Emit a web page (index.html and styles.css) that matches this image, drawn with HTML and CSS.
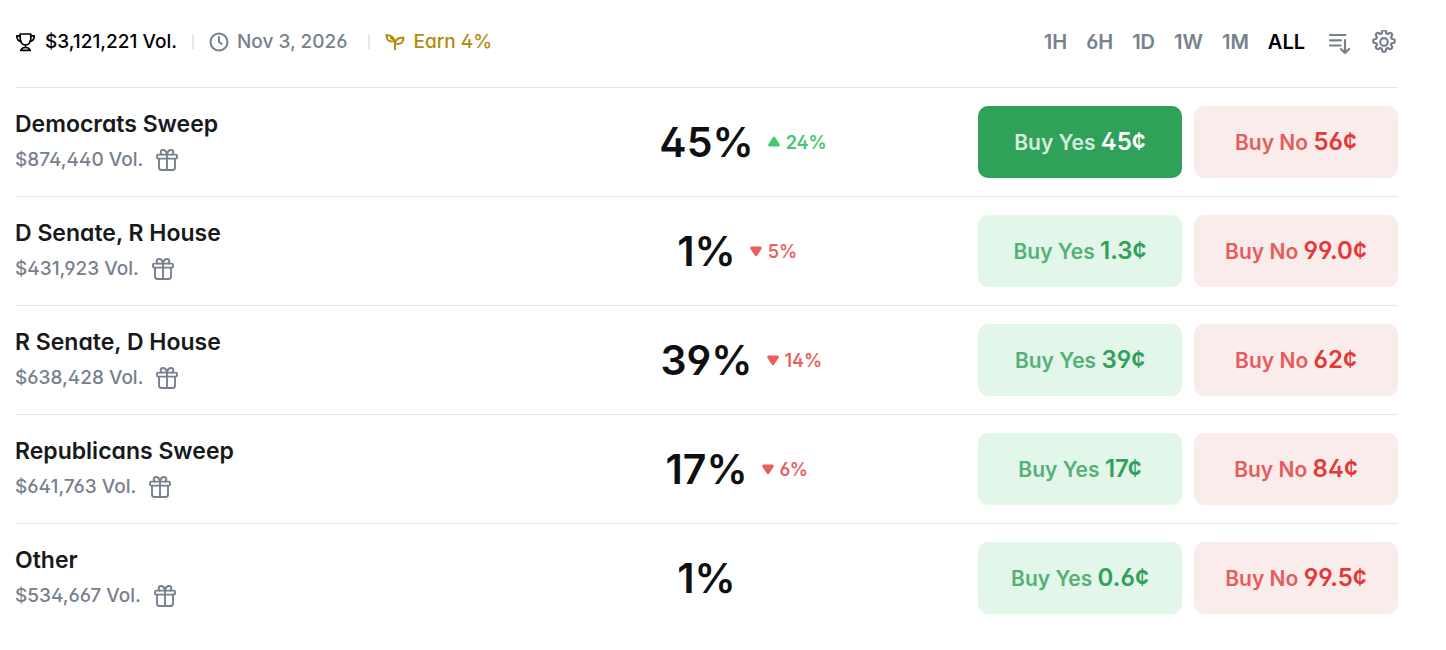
FILE: index.html
```html
<!DOCTYPE html>
<html lang="en">
  <head>
    <meta charset="UTF-8" />
    <meta name="viewport" content="width=device-width, initial-scale=1.0" />
    <title>Balance of Power: 2026 Midterms</title>
    <link rel="stylesheet" href="styles.css">
  </head>
  <body>
    <!-- shared icons -->
    <svg class="sprite" aria-hidden="true">
      <symbol id="gift" viewBox="0 0 22 22">
        <g fill="none" stroke="currentColor" stroke-width="1.9" stroke-linecap="round" stroke-linejoin="round">
          <rect x="1" y="5.6" width="20" height="4" rx="1.2" />
          <path d="M3 9.6v9a2.4 2.4 0 0 0 2.4 2.4h11.2a2.4 2.4 0 0 0 2.4-2.4v-9M11 5.6V21" />
          <path d="M11 5.6C10.5 2.6 9 1 7 1a2.3 2.3 0 0 0-2.3 2.3c0 1 .4 1.7 1 2.3M11 5.6C11.5 2.6 13 1 15 1a2.3 2.3 0 0 1 2.3 2.3c0 1-.4 1.7-1 2.3" />
        </g>
      </symbol>
      <symbol id="up" viewBox="0 0 12 12">
        <path d="M4.8 1.4a1.500 1.500 0 0 1 2.400 0l4.300 6.700c.7 1.100 0 2.400-1.300 2.400H1.800C.5 10.500-.2 9.200.5 8.100z" fill="currentColor" />
      </symbol>
      <symbol id="down" viewBox="0 0 12 12">
        <path d="M4.8 10.600a1.500 1.500 0 0 0 2.400 0l4.300-6.700c.7-1.100 0-2.400-1.300-2.400H1.800C.5 1.500-.2 2.800.5 3.900z" fill="currentColor" />
      </symbol>
    </svg>

    <main class="market">
      <header class="market-header">
        <div class="market-info">
          <span class="info-item volume">
            <svg class="info-icon" viewBox="0 0 20 20" fill="none" stroke="currentColor" stroke-width="1.7" stroke-linecap="round" stroke-linejoin="round">
              <path d="M5.200 2h10.600v4.500c0 3.800-2 6.500-5.300 6.500S5.200 10.300 5.200 6.500z" />
              <path d="M5.200 3.800H1.800c0 3.200 1.400 5.400 4.400 5.600M15.800 3.800h3.400c0 3.200-1.400 5.400-4.400 5.600M10.500 13v2.500M5.800 18.400c.6-1.900 2.200-2.900 4.700-2.900s4.100 1 4.700 2.900z" />
            </svg>
            $3,121,221 Vol.
          </span>
          <span class="divider"></span>
          <span class="info-item date">
            <svg class="info-icon" viewBox="0 0 20 20" fill="none" stroke="currentColor" stroke-width="2" stroke-linecap="round" stroke-linejoin="round">
              <circle cx="10" cy="10" r="8.500" />
              <path d="M10 5v5l2.800 2" />
            </svg>
            Nov 3, 2026
          </span>
          <span class="divider"></span>
          <a href="#" class="info-item earn">
            <svg class="info-icon" viewBox="0 0 20 20" fill="none" stroke="currentColor" stroke-width="2" stroke-linecap="round" stroke-linejoin="round">
              <path d="M10 17.500v-6C10 6.500 7 3 1.500 3c0 4.500 2.300 6.800 5.700 6.500" />
              <path d="M5.800 6C8 6.700 10 8.700 10 11.500" />
              <path d="M10 12.500c0-4.500 3-7 8.500-7 0 4.700-2.500 6.800-6.300 6.500" />
            </svg>
            Earn 4%
          </a>
        </div>

        <div class="chart-controls">
          <button class="range">1H</button>
          <button class="range">6H</button>
          <button class="range">1D</button>
          <button class="range">1W</button>
          <button class="range">1M</button>
          <button class="range active">ALL</button>
          <button class="icon-btn sort" aria-label="Sort">
            <svg viewBox="0 0 24 24" fill="none" stroke="currentColor" stroke-width="2.200" stroke-linecap="round" stroke-linejoin="round">
              <path d="M3 5h15.500M3 10.300h11M3 15.500h10.500M18 10v12.500M14 19l4 4 4-4" />
            </svg>
          </button>
          <button class="icon-btn" aria-label="Settings">
            <svg viewBox="0 0 24 24" fill="none" stroke="currentColor" stroke-width="2.200" stroke-linejoin="round">
              <circle cx="12" cy="12" r="3.800" />
              <path d="M10 2.200a2 2 0 0 1 4 0l.3 1.200 1.500.6 1.100-.7a2 2 0 0 1 2.800 2.800l-.7 1.100.6 1.500 1.200.3a2 2 0 0 1 0 4l-1.200.3-.6 1.500.7 1.100a2 2 0 0 1-2.800 2.800l-1.100-.7-1.500.6-.3 1.200a2 2 0 0 1-4 0l-.3-1.200-1.500-.6-1.100.7a2 2 0 0 1-2.800-2.800l.7-1.100-.6-1.500-1.200-.3a2 2 0 0 1 0-4l1.200-.3.6-1.500-.7-1.100a2 2 0 0 1 2.800-2.800l1.100.7 1.500-.6z" />
            </svg>
          </button>
        </div>
      </header>

      <section class="outcome">
        <div class="outcome-info">
          <h2 class="outcome-name">Democrats Sweep</h2>
          <p class="outcome-volume">$874,440 Vol. <svg class="gift"><use href="#gift" /></svg></p>
        </div>
        <div class="chance">45%</div>
        <div class="outcome-side">
          <span class="change up"><svg><use href="#up" /></svg>24%</span>
          <div class="actions">
            <button class="buy yes selected"><span>Buy Yes</span> <b>45¢</b></button>
            <button class="buy no"><span>Buy No</span> <b>56¢</b></button>
          </div>
        </div>
      </section>

      <section class="outcome">
        <div class="outcome-info">
          <h2 class="outcome-name">D Senate, R House</h2>
          <p class="outcome-volume">$431,923 Vol. <svg class="gift"><use href="#gift" /></svg></p>
        </div>
        <div class="chance">1%</div>
        <div class="outcome-side">
          <span class="change down"><svg><use href="#down" /></svg>5%</span>
          <div class="actions">
            <button class="buy yes"><span>Buy Yes</span> <b>1.3¢</b></button>
            <button class="buy no"><span>Buy No</span> <b>99.0¢</b></button>
          </div>
        </div>
      </section>

      <section class="outcome">
        <div class="outcome-info">
          <h2 class="outcome-name">R Senate, D House</h2>
          <p class="outcome-volume">$638,428 Vol. <svg class="gift"><use href="#gift" /></svg></p>
        </div>
        <div class="chance">39%</div>
        <div class="outcome-side">
          <span class="change down"><svg><use href="#down" /></svg>14%</span>
          <div class="actions">
            <button class="buy yes"><span>Buy Yes</span> <b>39¢</b></button>
            <button class="buy no"><span>Buy No</span> <b>62¢</b></button>
          </div>
        </div>
      </section>

      <section class="outcome">
        <div class="outcome-info">
          <h2 class="outcome-name">Republicans Sweep</h2>
          <p class="outcome-volume">$641,763 Vol. <svg class="gift"><use href="#gift" /></svg></p>
        </div>
        <div class="chance">17%</div>
        <div class="outcome-side">
          <span class="change down"><svg><use href="#down" /></svg>6%</span>
          <div class="actions">
            <button class="buy yes"><span>Buy Yes</span> <b>17¢</b></button>
            <button class="buy no"><span>Buy No</span> <b>84¢</b></button>
          </div>
        </div>
      </section>

      <section class="outcome">
        <div class="outcome-info">
          <h2 class="outcome-name">Other</h2>
          <p class="outcome-volume">$534,667 Vol. <svg class="gift"><use href="#gift" /></svg></p>
        </div>
        <div class="chance">1%</div>
        <div class="outcome-side">
          <div class="actions">
            <button class="buy yes"><span>Buy Yes</span> <b>0.6¢</b></button>
            <button class="buy no"><span>Buy No</span> <b>99.5¢</b></button>
          </div>
        </div>
      </section>
    </main>
  </body>
</html>
```
FILE: styles.css
```css
:root {
  --text-color: #18191b;
  --muted-color: #77808d;
  --line-color: #e6e7e8;
  --green: #30a159;
  --green-light: #e3f6ea;
  --red: #e23939;
  --red-light: #fbecec;
  --gold: #b38b0d;
}

* {
  margin: 0;
  padding: 0;
  box-sizing: border-box;
}

body {
  background: #fff;
  color: var(--text-color);
  font-family: Inter, "Liberation Sans", sans-serif;
  font-size: 19px;
  font-weight: 500;
  font-feature-settings: "cv11", "cv02", "cv03", "cv04";
}

button {
  font: inherit;
  font-feature-settings: inherit;
  color: inherit;
  background: none;
  border: none;
  cursor: pointer;
}

.sprite {
  display: none;
}

.market {
  padding: 0 48px 0 15px;
}

.market-header {
  display: flex;
  justify-content: space-between;
  align-items: center;
  height: 87px;
  padding-bottom: 4px;
}

.market-info,
.info-item,
.chart-controls {
  display: flex;
  align-items: center;
}

.market-info {
  gap: 15px;
}

.info-item {
  gap: 8px;
  line-height: 24px;
  text-decoration: none;
}

.info-icon {
  width: 20px;
  height: 20px;
}

.volume {
  gap: 10px;
  color: #000;
}

.date {
  color: var(--muted-color);
  margin-right: 6px;
}

.earn {
  color: var(--gold);
}

.divider {
  width: 2px;
  height: 14px;
  background: var(--line-color);
}

.chart-controls {
  gap: 19px;
  padding-right: 2px;
  color: var(--muted-color);
}

.range {
  font-size: 20px;
  font-weight: 600;
  line-height: 24px;
}

.range.active {
  color: #000;
}

.icon-btn {
  height: 24px;
}

.icon-btn svg {
  display: block;
  width: 24px;
  height: 24px;
}

.sort {
  margin: 0 2px 0 3px;
}

.outcome {
  display: grid;
  grid-template-columns: 1fr auto 1fr;
  align-items: center;
  padding: 18px 0;
  border-top: 1px solid var(--line-color);
}

.outcome-name {
  font-size: 23px;
  font-weight: 600;
  line-height: 36px;
}

.outcome-volume {
  display: flex;
  align-items: center;
  gap: 13px;
  line-height: 36px;
  color: var(--muted-color);
}

.gift {
  width: 22px;
  height: 22px;
}

.chance {
  font-size: 41px;
  font-weight: 600;
  line-height: 52px;
  color: #0e0f11;
}

.outcome-side {
  display: flex;
  align-items: center;
  padding-left: 14px;
}

.change {
  display: flex;
  align-items: center;
  gap: 6px;
  font-size: 18px;
  font-weight: 600;
}

.change svg {
  width: 12px;
  height: 12px;
}

.up {
  color: #43c773;
}

.down {
  color: #e95f5f;
}

.actions {
  display: flex;
  gap: 12px;
  margin-left: auto;
}

.buy {
  width: 204px;
  height: 72px;
  padding-bottom: 2px;
  border-radius: 10px;
  font-size: 21px;
  font-weight: 600;
  white-space: nowrap;
}

.buy span {
  opacity: 0.8;
}

.buy b {
  font-size: 24px;
  font-weight: 600;
}

.yes {
  background: var(--green-light);
  color: var(--green);
}

.yes.selected {
  background: var(--green);
  color: #fff;
}

.no {
  background: var(--red-light);
  color: var(--red);
}
```
